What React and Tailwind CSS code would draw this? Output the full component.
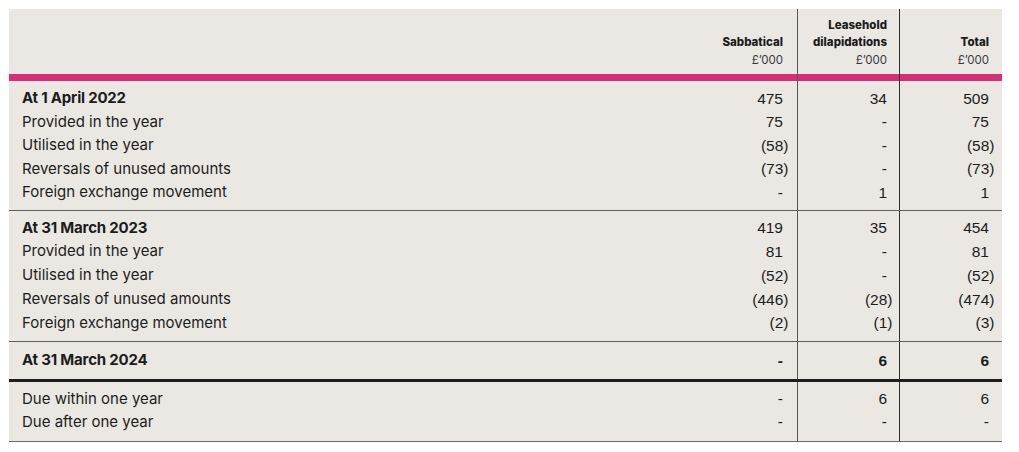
import React from "react";

const sections = [
  {
    cls: "h-[129px]",
    pt: "pt-[5.5px]",
    rowH: "h-[23.5px]",
    rows: [
      ["At 1 April 2022", "475", "34", "509", true],
      ["Provided in the year", "75", "-", "75"],
      ["Utilised in the year", "(58)", "-", "(58)"],
      ["Reversals of unused amounts", "(73)", "-", "(73)"],
      ["Foreign exchange movement", "-", "1", "1"],
    ],
  },
  {
    cls: "h-[131px] border-t border-[#5e5e5e]",
    pt: "pt-[5px]",
    rowH: "h-[23.75px]",
    rows: [
      ["At 31 March 2023", "419", "35", "454", true],
      ["Provided in the year", "81", "-", "81"],
      ["Utilised in the year", "(52)", "-", "(52)"],
      ["Reversals of unused amounts", "(446)", "(28)", "(474)"],
      ["Foreign exchange movement", "(2)", "(1)", "(3)"],
    ],
  },
  {
    cls: "h-[38px] border-t border-[#5e5e5e]",
    pt: "pt-[6.5px]",
    rowH: "h-[24px]",
    rows: [["At 31 March 2024", "-", "6", "6", true, true]],
  },
  {
    cls: "h-[63px] border-t-[3px] border-b border-t-[#1e1e1e] border-b-[#6a6a6a]",
    pt: "pt-[5.5px]",
    rowH: "h-[23px]",
    rows: [
      ["Due within one year", "-", "6", "6"],
      ["Due after one year", "-", "-", "-"],
    ],
  },
];

const labelFont = { fontFamily: "Inter, 'Liberation Sans', sans-serif" };
const numFont = { fontFamily: "'Liberation Sans', Arial, sans-serif" };

function Num({ v }) {
  if (v.startsWith("(")) {
    return (
      <span>
        {v.slice(0, -1)}
        <span className="-mr-[5.5px]">)</span>
      </span>
    );
  }
  return <span>{v}</span>;
}

function Section({ s }) {
  const col = (i, extra) => (
    <div className={`flex flex-col ${s.pt} ${extra}`}>
      {s.rows.map((r, k) => (
        <div
          key={k}
          className={`${s.rowH} flex items-center justify-end text-[15.5px] ${
            r[5] ? "font-bold" : ""
          }`}
          style={numFont}
        >
          <Num v={r[i]} />
        </div>
      ))}
    </div>
  );
  return (
    <div className={`flex ${s.cls}`}>
      <div className={`flex flex-1 flex-col pl-[13px] ${s.pt}`}>
        {s.rows.map((r, k) => (
          <div
            key={k}
            className={`${s.rowH} flex items-center text-[15px] ${
              r[4] ? "font-bold tracking-[-0.2px]" : ""
            }`}
            style={labelFont}
          >
            {r[0]}
          </div>
        ))}
      </div>
      {col(1, "w-[118px] border-r border-[#555] pr-[14px]")}
      {col(2, "w-[102px] border-r border-[#2e2e2e] pr-[12px]")}
      {col(3, "w-[102px] pr-[13px]")}
    </div>
  );
}

export default function App() {
  return (
    <div className="min-h-[452px] w-[1019px] bg-white pl-[9px] pt-[9px] text-[#1c1c1a]">
      <div className="w-[993px] bg-[#ebe8e4]">
        {/* header */}
        <div className="flex h-[65px]" style={labelFont}>
          <div className="flex-1" />
          <div className="flex w-[118px] flex-col items-end justify-end border-r border-[#555] pb-[5px] pr-[14px] text-[11.5px] leading-[17.5px]">
            <div className="font-extrabold">Sabbatical</div>
            <div className="text-[#3a3a3a]">£’000</div>
          </div>
          <div className="flex w-[102px] flex-col items-end justify-end border-r border-[#2e2e2e] pb-[5px] pr-[12px] text-[11.5px] leading-[17.5px]">
            <div className="font-extrabold">Leasehold</div>
            <div className="font-extrabold">dilapidations</div>
            <div className="text-[#3a3a3a]">£’000</div>
          </div>
          <div className="flex w-[102px] flex-col items-end justify-end pb-[5px] pr-[13px] text-[11.5px] leading-[17.5px]">
            <div className="font-extrabold">Total</div>
            <div className="text-[#3a3a3a]">£’000</div>
          </div>
        </div>
        {/* pink bar */}
        <div className="flex h-[7px] bg-[#d3307a]">
          <div className="flex-1" />
          <div className="w-[118px] border-r border-[#555]" />
          <div className="w-[102px] border-r border-[#2e2e2e]" />
          <div className="w-[102px]" />
        </div>
        {sections.map((s, i) => (
          <Section key={i} s={s} />
        ))}
      </div>
    </div>
  );
}
